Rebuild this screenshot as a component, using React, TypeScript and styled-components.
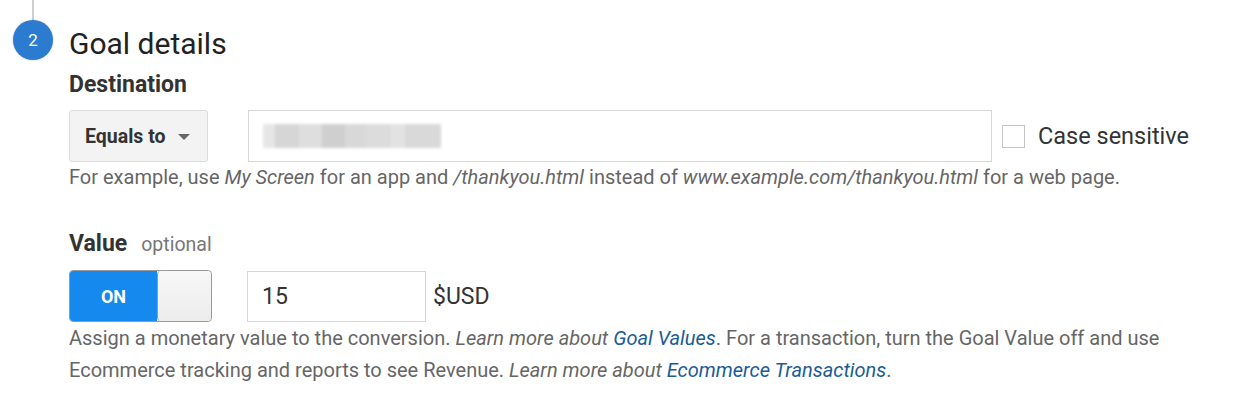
import React from "react";
import styled, { createGlobalStyle } from "styled-components";

const Global = createGlobalStyle`
  html, body { margin: 0; padding: 0; background: #fff; }
  body { font-family: Roboto, "Noto Sans", Arial, sans-serif; color: #333; }
`;

const Page = styled.div`
  width: 1246px;
  height: 406px;
  overflow: hidden;
`;

const StepLine = styled.div`
  width: 2px;
  height: 22px;
  margin-left: 32px;
  background: #cfcfcf;
`;

const StepHeader = styled.div`
  display: flex;
  align-items: center;
  gap: 16px;
  padding-left: 13px;
  height: 40px;
  margin-top: -2px;
`;

const StepCircle = styled.div`
  width: 40px;
  height: 40px;
  border-radius: 50%;
  background: #2b7cd0;
  color: #fff;
  font-size: 17px;
  display: flex;
  align-items: center;
  justify-content: center;
  box-shadow: 0 0 2px rgba(0, 0, 0, 0.25);
`;

const StepTitle = styled.h2`
  margin: 6px 0 0;
  font-size: 30px;
  font-weight: 400;
  color: #222;
`;

const Content = styled.div`
  padding-left: 69px;
`;

const Label = styled.div<{ $top: number }>`
  font-size: 23px;
  font-weight: 700;
  color: #333;
  margin-top: ${(p) => p.$top}px;
  height: 26px;
  line-height: 26px;
  display: flex;
  align-items: baseline;
  gap: 14px;
`;

const Optional = styled.span`
  font-size: 19.5px;
  font-weight: 400;
  color: #777;
`;

const Row = styled.div<{ $top: number }>`
  display: flex;
  align-items: center;
  margin-top: ${(p) => p.$top}px;
`;

const Dropdown = styled.button`
  width: 139px;
  height: 52px;
  box-sizing: border-box;
  border: 1px solid #dcdcdc;
  border-radius: 3px;
  background: #f3f3f3;
  font-family: inherit;
  font-size: 19.5px;
  font-weight: 700;
  color: #333;
  display: flex;
  align-items: center;
  padding: 0 0 0 15px;
  gap: 12px;
  margin: 0;
`;

const Caret = styled.span`
  width: 0;
  height: 0;
  border-left: 6px solid transparent;
  border-right: 6px solid transparent;
  border-top: 6px solid #666;
  margin-top: 2px;
`;

const TextBox = styled.div<{ $w: number; $ml: number; $h: number }>`
  width: ${(p) => p.$w}px;
  height: ${(p) => p.$h}px;
  margin-left: ${(p) => p.$ml}px;
  box-sizing: border-box;
  border: 1px solid #d6d6d6;
  background: #fff;
  display: flex;
  align-items: center;
  padding-left: 14px;
  font-size: 23px;
  color: #333;
`;

const Blurred = styled.div`
  width: 178px;
  height: 24px;
  background: linear-gradient(
    90deg,
    #e6e6e6 0 7%,
    #d6d6d6 7% 20%,
    #dedede 20% 33%,
    #cfcfcf 33% 46%,
    #d8d8d8 46% 58%,
    #dcdcdc 58% 72%,
    #e2e2e2 72% 80%,
    #d9d9d9 80% 100%
  );
  filter: blur(1.5px);
`;

const CheckLabel = styled.label`
  display: flex;
  align-items: center;
  gap: 13px;
  margin-left: 10px;
  font-size: 23.5px;
  color: #333;
`;

const CheckBox = styled.span`
  width: 23px;
  height: 23px;
  box-sizing: border-box;
  border: 1px solid #c4c4c4;
  background: #fff;
`;

const Hint = styled.p<{ $top: number }>`
  margin: ${(p) => p.$top}px 0 0;
  max-width: 1110px;
  font-size: 20px;
  line-height: 32px;
  color: #666;
  i {
    font-style: italic;
  }
`;

const Link = styled.a`
  color: #1a5c98;
  font-style: italic;
  text-decoration: none;
`;

const Toggle = styled.div`
  width: 143px;
  height: 52px;
  box-sizing: border-box;
  border: 1px solid #9a9a9a;
  border-radius: 4px;
  overflow: hidden;
  display: flex;
`;

const ToggleOn = styled.div`
  width: 87px;
  background: #1589ee;
  color: #fff;
  font-weight: 700;
  font-size: 18px;
  display: flex;
  align-items: center;
  justify-content: center;
`;

const ToggleKnob = styled.div`
  flex: 1;
  background: linear-gradient(#f7f7f7, #ececec);
  border-left: 1px solid #9a9a9a;
  border-radius: 4px;
`;

const Unit = styled.span`
  margin-left: 7px;
  font-size: 23px;
  color: #333;
`;

export default function App() {
  return (
    <Page>
      <Global />
      <StepLine />
      <StepHeader>
        <StepCircle>2</StepCircle>
        <StepTitle>Goal details</StepTitle>
      </StepHeader>
      <Content>
        <Label $top={12}>Destination</Label>
        <Row $top={12}>
          <Dropdown>
            Equals to <Caret />
          </Dropdown>
          <TextBox $w={744} $ml={40} $h={52}>
            <Blurred />
          </TextBox>
          <CheckLabel>
            <CheckBox />
            Case sensitive
          </CheckLabel>
        </Row>
        <Hint $top={-1}>
          For example, use <i>My Screen</i> for an app and <i>/thankyou.html</i> instead of{" "}
          <i>www.example.com/thankyou.html</i> for a web page.
        </Hint>
        <Label $top={38}>
          Value <Optional>optional</Optional>
        </Label>
        <Row $top={13}>
          <Toggle>
            <ToggleOn>ON</ToggleOn>
            <ToggleKnob />
          </Toggle>
          <TextBox $w={179} $ml={35} $h={51}>
            15
          </TextBox>
          <Unit>$USD</Unit>
        </Row>
        <Hint $top={0}>
          Assign a monetary value to the conversion. <i>Learn more about</i>{" "}
          <Link href="#">Goal Values</Link>. For a transaction, turn the Goal Value off and use
          Ecommerce tracking and reports to see Revenue. <i>Learn more about</i>{" "}
          <Link href="#">Ecommerce Transactions</Link>.
        </Hint>
      </Content>
    </Page>
  );
}
